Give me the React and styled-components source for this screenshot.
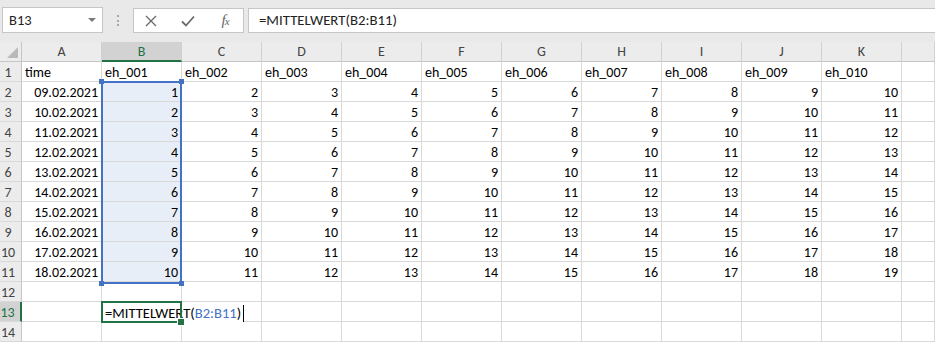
import React from "react";
import styled, { createGlobalStyle } from "styled-components";

const GlobalStyle = createGlobalStyle`
  html, body { margin: 0; padding: 0; background: #ffffff; overflow: hidden; }
  * { box-sizing: border-box; }
`;

const FONT = `Carlito, "Liberation Sans", Arial, sans-serif`;
const GREEN = "#217346";
const BLUE = "#4472c4";
const GRID = "#d9d9d9";

const Window = styled.div`
  width: 935px;
  height: 342px;
  overflow: hidden;
  font-family: ${FONT};
  background: #ffffff;
`;

const FormulaBar = styled.div`
  height: 42px;
  background: #e9e9e9;
  display: flex;
  align-items: flex-start;
  padding: 7px 0 0 2px;
`;

const NameBox = styled.div`
  width: 101px;
  height: 26px;
  background: #ffffff;
  border: 1px solid #c6c6c6;
  display: flex;
  align-items: center;
  justify-content: space-between;
  padding: 0 6px 1px 6px;
  font-size: 14.5px;
  color: #222;
`;

const Arrow = styled.span`
  width: 0;
  height: 0;
  border-left: 4px solid transparent;
  border-right: 4px solid transparent;
  border-top: 4px solid #7a7a7a;
  margin-top: 1px;
`;

const Grip = styled.div`
  width: 1px;
  height: 11px;
  margin: 8px 14px 0 14px;
  border-left: 2px dotted #a8a8a8;
`;

const FxBox = styled.div`
  width: 111px;
  height: 25px;
  margin-top: 1px;
  background: #ffffff;
  border: 1px solid #c6c6c6;
  display: flex;
  align-items: center;
  gap: 17px;
  padding: 0 0 0 7px;
`;

const IconBtn = styled.span`
  width: 20px;
  display: flex;
  align-items: center;
  justify-content: center;
  color: #6a6a6a;
`;

const FxText = styled.span`
  font-family: "Liberation Serif", "DejaVu Serif", serif;
  font-style: italic;
  font-size: 15px;
  color: #666;
  letter-spacing: -1px;
  small { font-size: 11px; }
`;

const FormulaInput = styled.div`
  flex: 1;
  height: 25px;
  margin: 1px 0 0 4px;
  background: #ffffff;
  border: 1px solid #c6c6c6;
  border-right: none;
  display: flex;
  align-items: center;
  padding: 0 0 1px 10px;
  font-size: 14.8px;
  color: #222;
`;

const Sheet = styled.div`
  position: relative;
  display: grid;
  grid-template-columns: 22px repeat(11, 80px) 33px;
  grid-auto-rows: 20px;
`;

const Corner = styled.div`
  background: #ececec;
  border-right: 1px solid #c6c6c6;
  border-bottom: 1px solid #c6c6c6;
  position: relative;
  &::after {
    content: "";
    position: absolute;
    right: 3px;
    bottom: 3px;
    width: 0;
    height: 0;
    border-left: 11px solid transparent;
    border-bottom: 11px solid #b9b9b9;
  }
`;

const ColHeader = styled.div`
  background: ${(p) => (p.$active ? "#d2d2d2" : "#ececec")};
  color: ${(p) => (p.$active ? GREEN : "#444")};
  border-right: 1px solid #d0d0d0;
  border-bottom: ${(p) => (p.$active ? `2px solid ${GREEN}` : "1px solid #c6c6c6")};
  font-size: 14px;
  text-align: center;
  padding-top: 1px;
  line-height: 17px;
`;

const RowHeader = styled.div`
  background: ${(p) => (p.$active ? "#d2d2d2" : "#ececec")};
  color: ${(p) => (p.$active ? GREEN : "#444")};
  border-right: ${(p) => (p.$active ? `2px solid ${GREEN}` : "1px solid #c6c6c6")};
  border-bottom: 1px solid ${GRID};
  font-size: 14px;
  text-align: center;
  padding: 3px 5px 0 0;
  line-height: 16px;
`;

const Cell = styled.div`
  background: ${(p) => (p.$selected ? "#e8eef8" : "#ffffff")};
  border-right: 1px solid ${GRID};
  border-bottom: 1px solid ${GRID};
  font-size: 14px;
  color: #000;
  text-align: ${(p) => (p.$num ? "right" : "left")};
  padding: 3px 3px 0 3px;
  line-height: 16px;
  white-space: nowrap;
  overflow: ${(p) => (p.$overflow ? "visible" : "hidden")};
  position: relative;
  z-index: ${(p) => (p.$overflow ? 2 : 0)};
`;

const EditText = styled.span`
  background: #ffffff;
  font-size: 14.6px;
`;

const Ref = styled.span`
  color: ${BLUE};
`;

const Caret = styled.span`
  display: inline-block;
  width: 1px;
  height: 17px;
  background: #000;
  vertical-align: -4px;
  margin-left: 2px;
`;

const RangeBox = styled.div`
  position: absolute;
  left: 101px;
  top: 39px;
  width: 81px;
  height: 203px;
  border: 2px solid ${BLUE};
  pointer-events: none;
  z-index: 3;
`;

const Handle = styled.span`
  position: absolute;
  width: 5px;
  height: 5px;
  background: ${(p) => p.$color};
  ${(p) => p.$pos}
`;

const ActiveBox = styled.div`
  position: absolute;
  left: 101px;
  top: 259px;
  width: 81px;
  height: 22px;
  border: 2px solid ${GREEN};
  pointer-events: none;
  z-index: 3;
`;

const FillHandle = styled.span`
  position: absolute;
  right: -4px;
  bottom: -4px;
  width: 6px;
  height: 6px;
  background: ${GREEN};
  outline: 1px solid #ffffff;
`;

const cols = ["A", "B", "C", "D", "E", "F", "G", "H", "I", "J", "K", ""];

function cellContent(r, c) {
  if (r === 1) {
    if (c === 0) return { text: "time" };
    if (c <= 10) return { text: `eh_${String(c).padStart(3, "0")}` };
    return { text: "" };
  }
  if (r >= 2 && r <= 11) {
    if (c === 0) {
      const d = String(r + 7).padStart(2, "0");
      return { text: `${d}.02.2021`, num: true };
    }
    if (c <= 10) return { text: String(r + c - 2), num: true };
  }
  return { text: "" };
}

function XIcon() {
  return (
    <svg width="12" height="12" viewBox="0 0 12 12">
      <path d="M1 1 L11 11 M11 1 L1 11" stroke="#6a6a6a" strokeWidth="1.3" fill="none" />
    </svg>
  );
}

function CheckIcon() {
  return (
    <svg width="14" height="12" viewBox="0 0 14 12">
      <path d="M1 6.5 L5 10.5 L13 1.5" stroke="#6a6a6a" strokeWidth="1.8" fill="none" />
    </svg>
  );
}

export default function App() {
  const rows = Array.from({ length: 14 }, (_, i) => i + 1);
  return (
    <Window>
      <GlobalStyle />
      <FormulaBar>
        <NameBox>
          <span>B13</span>
          <Arrow />
        </NameBox>
        <Grip />
        <FxBox>
          <IconBtn><XIcon /></IconBtn>
          <IconBtn><CheckIcon /></IconBtn>
          <IconBtn><FxText>f<small>x</small></FxText></IconBtn>
        </FxBox>
        <FormulaInput>=MITTELWERT(B2:B11)</FormulaInput>
      </FormulaBar>
      <Sheet>
        <Corner />
        {cols.map((c, i) => (
          <ColHeader key={"h" + i} $active={c === "B"}>{c}</ColHeader>
        ))}
        {rows.map((r) => (
          <React.Fragment key={r}>
            <RowHeader $active={r === 13}>{r}</RowHeader>
            {cols.map((_, c) => {
              if (r === 13 && c === 1) {
                return (
                  <Cell key={c} $overflow>
                    <EditText>
                      =MITTELWERT(<Ref>B2:B11</Ref>)<Caret />
                    </EditText>
                  </Cell>
                );
              }
              const { text, num } = cellContent(r, c);
              const selected = c === 1 && r >= 2 && r <= 11;
              return (
                <Cell key={c} $num={num} $selected={selected} $overflow={r === 1}>
                  {text}
                </Cell>
              );
            })}
          </React.Fragment>
        ))}
        <RangeBox>
          <Handle $color={BLUE} $pos="left:-4px;top:-4px;" />
          <Handle $color={BLUE} $pos="right:-4px;top:-4px;" />
          <Handle $color={BLUE} $pos="left:-4px;bottom:-4px;" />
          <Handle $color={BLUE} $pos="right:-4px;bottom:-4px;" />
        </RangeBox>
        <ActiveBox>
          <FillHandle />
        </ActiveBox>
      </Sheet>
    </Window>
  );
}
